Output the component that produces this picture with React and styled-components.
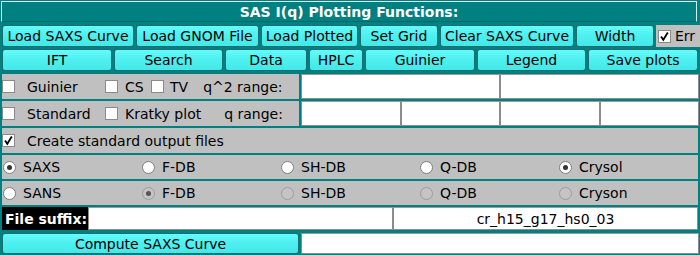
import React from "react";
import styled, { createGlobalStyle } from "styled-components";

const GlobalStyle = createGlobalStyle`
  html, body {
    margin: 0;
    padding: 0;
    background: #008080;
  }
  body {
    font-family: "DejaVu Sans", "Liberation Sans", sans-serif;
    font-size: 14px;
    color: #000;
  }
`;

const Window = styled.div`
  width: 700px;
  height: 255px;
  box-sizing: border-box;
  padding: 1px 2px 0 2px;
  display: flex;
  flex-direction: column;
  gap: 2px;
  background: #008080;
  overflow: hidden;
`;

const TitleBar = styled.div`
  height: 21px;
  margin: 0 1px 0 -1px;
  box-sizing: border-box;
  border: 1px solid #d8ecec;
  border-bottom-color: #006a6a;
  display: flex;
  align-items: center;
  justify-content: center;
  color: #fff;
  font-weight: bold;
  font-size: 14px;
`;

const Row = styled.div`
  display: flex;
  height: ${(p) => p.h}px;
  margin-top: ${(p) => p.mt || 0}px;
  gap: ${(p) => (p.gap === undefined ? 2 : p.gap)}px;
`;

const Button = styled.button`
  width: ${(p) => p.w}px;
  flex: ${(p) => (p.w ? "none" : 1)};
  height: 100%;
  box-sizing: border-box;
  margin: 0;
  padding: 0 2px;
  border: 1px solid #1d6e6e;
  border-radius: 3px;
  background: linear-gradient(to bottom, #66fbfb 0%, #4ff0f0 45%, #44e8e8 100%);
  font-family: inherit;
  font-size: 14px;
  color: #000;
  white-space: nowrap;
  overflow: hidden;
  display: flex;
  align-items: center;
  justify-content: center;
`;

const Panel = styled.div`
  background: #c0c0c0;
  width: ${(p) => (p.w ? `${p.w}px` : "auto")};
  flex: ${(p) => (p.w ? "none" : 1)};
  display: flex;
  align-items: center;
  box-sizing: border-box;
  padding-left: ${(p) => p.pl || 0}px;
  margin-right: ${(p) => p.mr || 0}px;
  white-space: nowrap;
`;

const Field = styled.div`
  flex: 1;
  min-width: 0;
  background: #fff;
  box-sizing: border-box;
  border: 1px solid #8c8c8c;
  border-top-color: #9a9a9a;
  display: flex;
  align-items: center;
  justify-content: center;
  white-space: nowrap;
`;

const Fields = styled.div`
  display: flex;
  width: ${(p) => p.w}px;
  flex: none;
  margin-left: ${(p) => p.ml || 0}px;
`;

const Box = styled.span`
  width: 13px;
  height: 13px;
  box-sizing: border-box;
  flex: none;
  background: #fff;
  border: 1px solid #8a8a8a;
  display: inline-flex;
  align-items: center;
  justify-content: center;
`;

const Check = styled.label`
  display: inline-flex;
  align-items: center;
  gap: ${(p) => p.gap || 12}px;
  width: ${(p) => (p.w ? `${p.w}px` : "auto")};
  flex: none;
`;

const Label = styled.span`
  margin-left: ${(p) => p.ml || 0}px;
`;

const Tick = () => (
  <svg width="11" height="11" viewBox="0 0 11 11">
    <path d="M2 5.5 L4.3 8.8 L8.8 1.5" fill="none" stroke="#000" strokeWidth="1.8" />
  </svg>
);

const RadioGrid = styled.div`
  display: grid;
  grid-template-columns: repeat(5, 1fr);
  align-items: center;
  background: #c0c0c0;
  height: ${(p) => p.h}px;
  margin-top: ${(p) => p.mt || 0}px;
  padding-left: 1px;
`;

const Radio = styled.label`
  display: inline-flex;
  align-items: center;
  gap: 7px;
`;

const Dot = styled.span`
  width: 13px;
  height: 13px;
  box-sizing: border-box;
  border-radius: 50%;
  border: 1px solid ${(p) => (p.disabled ? "#9c9c9c" : "#7e7e7e")};
  background: ${(p) => (p.disabled ? "#c4c4c4" : "#fff")};
  display: inline-flex;
  align-items: center;
  justify-content: center;
  &::after {
    content: "";
    display: ${(p) => (p.on ? "block" : "none")};
    width: 5px;
    height: 5px;
    border-radius: 50%;
    background: ${(p) => (p.disabled ? "#555" : "#333")};
  }
`;

const SuffixTag = styled.div`
  width: 86px;
  flex: none;
  background: #000;
  color: #fff;
  font-weight: bold;
  display: flex;
  align-items: center;
  padding-left: 3px;
  box-sizing: border-box;
`;

const radios = [
  [
    { t: "SAXS", on: true },
    { t: "F-DB" },
    { t: "SH-DB" },
    { t: "Q-DB" },
    { t: "Crysol", on: true },
  ],
  [
    { t: "SANS" },
    { t: "F-DB", on: true, disabled: true },
    { t: "SH-DB", disabled: true },
    { t: "Q-DB", disabled: true },
    { t: "Cryson", disabled: true },
  ],
];

export default function App() {
  return (
    <>
      <GlobalStyle />
      <Window>
        <TitleBar>SAS I(q) Plotting Functions:</TitleBar>

        <Row h={22} mt={1}>
          <Button w={132}>Load SAXS Curve</Button>
          <Button w={123}>Load GNOM File</Button>
          <Button w={97}>Load Plotted</Button>
          <Button w={78}>Set Grid</Button>
          <Button w={134}>Clear SAXS Curve</Button>
          <Button w={78}>Width</Button>
          <Panel pl={2} mr={-2}>
            <Check gap={4}>
              <Box>
                <Tick />
              </Box>
              Err
            </Check>
          </Panel>
        </Row>

        <Row h={22}>
          <Button w={110}>IFT</Button>
          <Button w={109}>Search</Button>
          <Button w={82}>Data</Button>
          <Button w={54}>HPLC</Button>
          <Button w={110}>Guinier</Button>
          <Button w={109}>Legend</Button>
          <Button>Save plots</Button>
        </Row>

        <Row h={25} mt={1} gap={0}>
          <Panel w={297}>
            <Check w={103}>
              <Box />
              Guinier
            </Check>
            <Check gap={7} w={46}>
              <Box />
              CS
            </Check>
            <Check gap={6}>
              <Box />
              TV
            </Check>
            <Label ml={15}>q^2 range:</Label>
          </Panel>
          <Fields w={398} ml={2}>
            <Field />
            <Field />
          </Fields>
        </Row>

        <Row h={25} gap={0}>
          <Panel w={297}>
            <Check w={103}>
              <Box />
              Standard
            </Check>
            <Check gap={7}>
              <Box />
              Kratky plot
            </Check>
            <Label ml={23}>q range:</Label>
          </Panel>
          <Fields w={398} ml={2}>
            <Field />
            <Field />
            <Field />
            <Field />
          </Fields>
        </Row>

        <Row h={25}>
          <Panel>
            <Check>
              <Box>
                <Tick />
              </Box>
              Create standard output files
            </Check>
          </Panel>
        </Row>

        {radios.map((row, i) => (
          <RadioGrid key={i} h={24}>
            {row.map((r) => (
              <Radio key={r.t}>
                <Dot on={r.on} disabled={r.disabled} />
                {r.t}
              </Radio>
            ))}
          </RadioGrid>
        ))}

        <Row h={23} gap={0}>
          <SuffixTag>File suffix:</SuffixTag>
          <Field />
          <Field>cr_h15_g17_hs0_03</Field>
        </Row>

        <Row h={21} mt={1} gap={0}>
          <Button w={297}>Compute SAXS Curve</Button>
          <Fields w={398} ml={2}>
            <Field />
          </Fields>
        </Row>
      </Window>
    </>
  );
}
